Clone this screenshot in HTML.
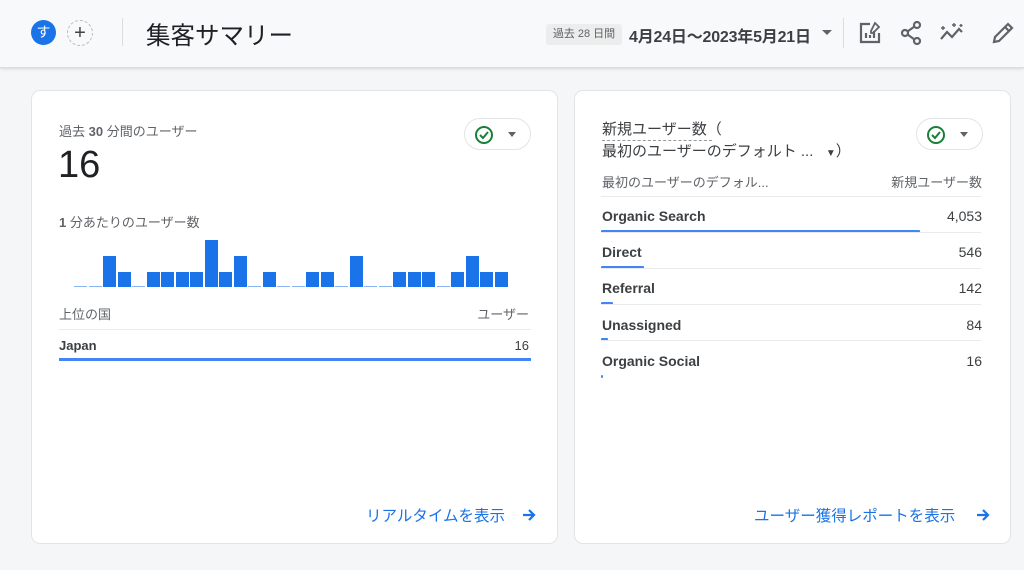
<!DOCTYPE html>
<html><head><meta charset="utf-8"><style>
*{margin:0;padding:0;box-sizing:border-box}
body{width:1024px;height:570px;background:#f5f6f8;font-family:"Liberation Sans","Noto Sans CJK JP",sans-serif;position:relative;overflow:hidden;color:#3c4043}
.a{position:absolute;white-space:nowrap}
.hdr{position:absolute;left:0;top:0;width:1024px;height:68px;background:#f8f9fa;border-bottom:1px solid #dcdde0;box-shadow:0 1px 3px rgba(0,0,0,.12)}
.card{position:absolute;background:#fff;border:1px solid #e3e4e6;border-radius:9px}
.pill{position:absolute;width:67px;height:32px;border:1px solid #e3e4e6;border-radius:16px;background:#fff}
.bar{position:absolute;background:#1a73e8;bottom:0;width:13px}
.emp{position:absolute;bottom:0;width:13px;height:1px;background:#8ab4f8}
.row{position:absolute;left:26px;width:380px;height:1px;background:#e8eaed}
.ln{position:absolute;left:26px;height:3px;background:#4285f4;border-radius:1px}
.arr{position:absolute;top:2px}
</style></head><body>
<div class="hdr">
 <div class="a" style="left:31px;top:20px;width:25px;height:25px;border-radius:50%;background:#1a73e8;color:#fff;font-size:14px;text-align:center;line-height:25px">す</div>
 <div class="a" style="left:67px;top:20px;width:26px;height:26px;border-radius:50%;border:1px dashed #bbb;color:#444;font-size:20px;text-align:center;line-height:24px">+</div>
 <div class="a" style="left:122px;top:18px;width:1px;height:28px;background:#dadce0"></div>
 <div class="a" style="left:146px;top:17px;font-size:24.5px;color:#202124">集客サマリー</div>
 <div class="a" style="left:546px;top:24px;width:76px;height:21px;text-align:center;background:#eceded;border-radius:3px;font-size:11px;line-height:21px;color:#5f6368">過去 28 日間</div>
 <div class="a" style="left:629px;top:23px;font-size:16px;color:#3c4043;font-weight:bold;letter-spacing:-0.2px">4月24日〜2023年5月21日</div>
 <div class="a" style="left:822px;top:30px;width:0;height:0;border-left:5px solid transparent;border-right:5px solid transparent;border-top:5px solid #5f6368"></div>
 <div class="a" style="left:843px;top:18px;width:1px;height:30px;background:#dadce0"></div>
 <svg class="a" style="left:857px;top:20px" width="26" height="26" viewBox="0 0 26 26" fill="none" stroke="#5f6368" stroke-width="2.2"><path d="M13 4H4v18h18v-9"/><path d="M9 18v-5M13 18v-3M17 18v-7"/><path d="M18 3l4 4-6 6h-2v-2z" stroke-width="1.8"/></svg>
 <svg class="a" style="left:899px;top:20px" width="26" height="26" viewBox="0 0 26 26" fill="none" stroke="#5f6368" stroke-width="2.2"><circle cx="18" cy="5" r="3"/><circle cx="6" cy="13" r="3"/><circle cx="18" cy="21" r="3"/><path d="M8.5 11.5l7-5M8.5 14.5l7 5"/></svg>
 <svg class="a" style="left:938px;top:20px" width="28" height="26" viewBox="0 0 28 26" fill="none" stroke="#5f6368" stroke-width="2.2"><path d="M3 19l6-7 5 5 7-8 3 3"/><path d="M5 6v4M3 8h4M16 3v4M14 5h4M23 4v3M21.5 5.5h3" stroke-width="1.4"/></svg>
 <svg class="a" style="left:990px;top:20px" width="26" height="26" viewBox="0 0 26 26" fill="none" stroke="#5f6368" stroke-width="2.2"><path d="M4 22l1-5L18 4l4 4L9 21z"/><path d="M15 7l4 4"/></svg>
</div>

<div class="card" style="left:31px;top:90px;width:527px;height:454px">
 <div class="a" style="left:27px;top:30px;font-size:13px;color:#5f6368">過去 <b>30</b> 分間のユーザー</div>
 <div class="a" style="left:26px;top:53px;font-size:38px;color:#202124">16</div>
 <div class="pill" style="left:432px;top:27px"><svg class="a" style="left:8px;top:5px" width="22" height="22" viewBox="0 0 22 22" fill="none" stroke="#188038" stroke-width="2"><circle cx="11" cy="11" r="8"/><path d="M7 11l3 3 5-6"/></svg><div class="a" style="left:43px;top:13px;border-left:4px solid transparent;border-right:4px solid transparent;border-top:5px solid #5f6368"></div></div>
 <div class="a" style="left:27px;top:121px;font-size:13px;color:#5f6368"><b>1</b> 分あたりのユーザー数</div>
 <div class="a" style="left:27px;top:213px;font-size:13px;color:#5f6368">上位の国</div>
 <div class="a" style="right:28px;top:213px;font-size:13px;color:#5f6368">ユーザー</div>
 <div class="a" style="left:27px;top:238px;width:472px;height:1px;background:#e8eaed"></div>
 <div class="a" style="left:27px;top:247px;font-size:13px;font-weight:bold;color:#3c4043">Japan</div>
 <div class="a" style="right:28px;top:247px;font-size:13px;color:#3c4043">16</div>
 <div class="a" style="left:27px;top:267px;width:472px;height:3px;background:#4285f4"></div>
 <div class="a" style="left:334px;top:413px;font-size:15.5px;color:#1a73e8">リアルタイムを表示</div>
 <svg class="a" style="left:489px;top:416px" width="16" height="16" viewBox="0 0 16 16" fill="none" stroke="#1a73e8" stroke-width="2.2"><path d="M2 8h11M8 3l5 5-5 5"/></svg>
</div>

<div class="card" style="left:574px;top:90px;width:437px;height:454px">
 <div class="a" style="left:27px;top:28px;font-size:15px;color:#3c4043;line-height:22px">新規ユーザー数（<br>最初のユーザーのデフォルト ... &nbsp;&nbsp;<span style="font-size:10px">▼</span>）</div>
 <div class="a" style="left:27px;top:49px;width:110px;border-top:1px dashed #999"></div>
 <div class="pill" style="left:341px;top:27px"><svg class="a" style="left:8px;top:5px" width="22" height="22" viewBox="0 0 22 22" fill="none" stroke="#188038" stroke-width="2"><circle cx="11" cy="11" r="8"/><path d="M7 11l3 3 5-6"/></svg><div class="a" style="left:43px;top:13px;border-left:4px solid transparent;border-right:4px solid transparent;border-top:5px solid #5f6368"></div></div>
 <div class="a" style="left:27px;top:81px;font-size:13px;color:#5f6368">最初のユーザーのデフォル...</div>
 <div class="a" style="right:28px;top:81px;font-size:13px;color:#5f6368">新規ユーザー数</div>
 <div class="row" style="top:105px"></div>
 <div class="a" style="left:27px;top:117px;font-size:14px;font-weight:bold">Organic Search</div><div class="a" style="right:28px;top:117px;font-size:14px">4,053</div>
 <div class="ln" style="top:139px;width:319px"></div>
 <div class="row" style="top:141px"></div>
 <div class="a" style="left:27px;top:153px;font-size:14px;font-weight:bold">Direct</div><div class="a" style="right:28px;top:153px;font-size:14px">546</div>
 <div class="ln" style="top:175px;width:43px"></div>
 <div class="row" style="top:177px"></div>
 <div class="a" style="left:27px;top:189px;font-size:14px;font-weight:bold">Referral</div><div class="a" style="right:28px;top:189px;font-size:14px">142</div>
 <div class="ln" style="top:211px;width:12px"></div>
 <div class="row" style="top:213px"></div>
 <div class="a" style="left:27px;top:226px;font-size:14px;font-weight:bold">Unassigned</div><div class="a" style="right:28px;top:226px;font-size:14px">84</div>
 <div class="ln" style="top:247px;width:7px"></div>
 <div class="row" style="top:249px"></div>
 <div class="a" style="left:27px;top:262px;font-size:14px;font-weight:bold">Organic Social</div><div class="a" style="right:28px;top:262px;font-size:14px">16</div>
 <div class="ln" style="top:284px;width:2px"></div>
 <div class="a" style="left:179px;top:413px;font-size:15.5px;color:#1a73e8">ユーザー獲得レポートを表示</div>
 <svg class="a" style="left:400px;top:416px" width="16" height="16" viewBox="0 0 16 16" fill="none" stroke="#1a73e8" stroke-width="2.2"><path d="M2 8h11M8 3l5 5-5 5"/></svg>
</div>

<div class="a" style="left:74px;top:240px;width:440px;height:47px">
<div class="emp" style="left:0px"></div><div class="emp" style="left:14.5px"></div>
<div class="bar" style="left:29px;height:31px"></div><div class="bar" style="left:43.5px;height:15px"></div>
<div class="emp" style="left:58px"></div>
<div class="bar" style="left:72.5px;height:15px"></div><div class="bar" style="left:87px;height:15px"></div><div class="bar" style="left:101.5px;height:15px"></div><div class="bar" style="left:116px;height:15px"></div>
<div class="bar" style="left:130.5px;height:47px"></div><div class="bar" style="left:145px;height:15px"></div><div class="bar" style="left:159.5px;height:31px"></div>
<div class="emp" style="left:174px"></div>
<div class="bar" style="left:188.5px;height:15px"></div>
<div class="emp" style="left:203px"></div><div class="emp" style="left:217.5px"></div>
<div class="bar" style="left:232px;height:15px"></div><div class="bar" style="left:246.5px;height:15px"></div>
<div class="emp" style="left:261px"></div>
<div class="bar" style="left:275.5px;height:31px"></div>
<div class="emp" style="left:290px"></div><div class="emp" style="left:304.5px"></div>
<div class="bar" style="left:319px;height:15px"></div><div class="bar" style="left:333.5px;height:15px"></div><div class="bar" style="left:348px;height:15px"></div>
<div class="emp" style="left:362.5px"></div>
<div class="bar" style="left:377px;height:15px"></div><div class="bar" style="left:391.5px;height:31px"></div><div class="bar" style="left:406px;height:15px"></div><div class="bar" style="left:420.5px;height:15px"></div>
</div>
</body></html>
